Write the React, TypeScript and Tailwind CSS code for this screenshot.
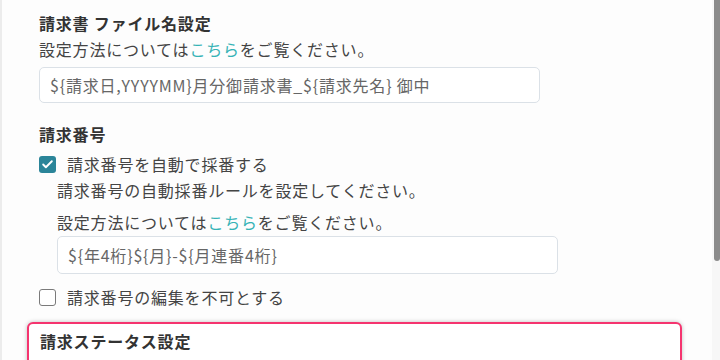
import { Check } from 'lucide-react'

const font = { fontFamily: '"Noto Sans CJK JP", "Noto Sans", sans-serif' }

function Checkbox({ checked }: { checked: boolean }) {
  if (checked) {
    return (
      <span className="flex h-[17px] w-[17px] shrink-0 items-center justify-center rounded-[3px] bg-[#2b8599]">
        <Check size={13} strokeWidth={3.5} color="#fff" />
      </span>
    )
  }
  return <span className="h-[17px] w-[17px] shrink-0 rounded-[3px] border-[1.5px] border-[#7a7a7a] bg-white" />
}

function Field({ value, tall }: { value: string; tall?: boolean }) {
  return (
    <div
      className={
        'flex w-[501px] items-center rounded-[5px] border border-[#dbe1e7] bg-white px-[10px] text-[16px] tracking-[0.05em] text-[#666] ' +
        (tall ? 'h-[38px]' : 'h-[36px]')
      }
    >
      {value}
    </div>
  )
}

function HowTo() {
  return (
    <p>
      設定方法については<a className="text-[#35b3b6]">こちら</a>をご覧ください。
    </p>
  )
}

export default function App() {
  return (
    <div
      className="flex h-[360px] w-[720px] overflow-hidden border-l-2 border-[#ececec] bg-[#fdfdfd] text-[16px] leading-[26px] tracking-[0.05em] text-[#444]"
      style={font}
    >
      <div className="flex-1 pl-[37px] pt-[10px]">
        <h2 className="font-bold text-[#333]">請求書 ファイル名設定</h2>
        <HowTo />
        <div className="mt-[5px]">
          <Field value="${請求日,YYYYMM}月分御請求書_${請求先名} 御中" />
        </div>

        <h2 className="mt-[18px] font-bold text-[#333]">請求番号</h2>
        <label className="mt-[4px] flex items-center gap-[11px]">
          <Checkbox checked />
          <span>請求番号を自動で採番する</span>
        </label>
        <div className="pl-[18px]">
          <p>請求番号の自動採番ルールを設定してください。</p>
          <div className="mt-[6px]">
            <HowTo />
          </div>
          <div className="mt-[1px]">
            <Field value="${年4桁}${月}-${月連番4桁}" tall />
          </div>
        </div>
        <label className="mt-[10px] flex items-center gap-[11px]">
          <Checkbox checked={false} />
          <span>請求番号の編集を不可とする</span>
        </label>

        <div className="ml-[-12px] mt-[12px] h-[80px] w-[655px] rounded-[6px] border-2 border-[#f5346f] bg-white pl-[11px] pt-[4px] shadow-[0_0_4px_rgba(0,0,0,0.25)]">
          <h2 className="font-bold text-[#333]">請求ステータス設定</h2>
        </div>
      </div>
      <div className="flex w-[8px] justify-end bg-[#f7f7f7]">
        <div className="h-[261px] w-[6px] rounded-b-[4px] bg-[#8b8b8b]" />
      </div>
    </div>
  )
}
